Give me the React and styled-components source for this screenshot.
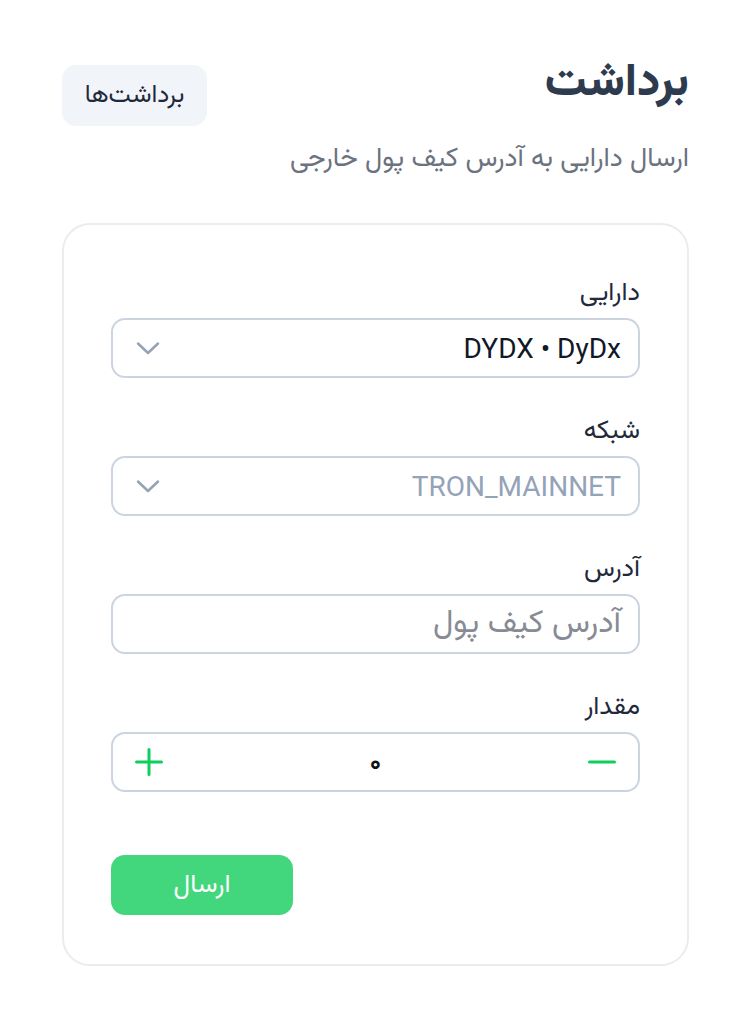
import React, { useState } from 'react';
import styled, { createGlobalStyle } from 'styled-components';

const GlobalStyle = createGlobalStyle`
  * { box-sizing: border-box; }
  body {
    margin: 0;
    background: #ffffff;
    font-family: Vazirmatn, "Noto Sans Arabic", "DejaVu Sans", Roboto, sans-serif;
  }
`;

const Page = styled.div`
  direction: rtl;
  width: 751px;
  padding: 58px 62px 40px;
`;

const Header = styled.div`
  display: flex;
  justify-content: space-between;
  align-items: flex-start;
`;

const TitleBlock = styled.div`
  display: flex;
  flex-direction: column;
  gap: 30px;
`;

const Title = styled.h1`
  margin: 0;
  font-size: 46px;
  font-weight: 800;
  color: #2e3a4e;
  line-height: 52px;
`;

const Subtitle = styled.p`
  margin: 0;
  font-size: 27px;
  color: #6b7280;
  line-height: 40px;
`;

const HistoryButton = styled.button`
  margin-top: 7px;
  width: 145px;
  height: 61px;
  border: none;
  border-radius: 14px;
  background: #f1f5f9;
  color: #1e293b;
  font-family: inherit;
  font-size: 25px;
  cursor: pointer;
`;

const Card = styled.div`
  margin-top: 43px;
  border: 2px solid #ececec;
  border-radius: 28px;
  padding: 51px 47px 49px;
  display: flex;
  flex-direction: column;
`;

const Field = styled.div`
  display: flex;
  flex-direction: column;
  gap: 6px;
  margin-bottom: 36px;
`;

const Label = styled.label`
  font-size: 26px;
  line-height: 36px;
  color: #1e293b;
`;

const Box = styled.div`
  height: 60px;
  border: 2px solid #cbd5e1;
  border-radius: 14px;
  display: flex;
  align-items: center;
  justify-content: space-between;
  padding: 0 17px 0 22px;
`;

const Value = styled.span`
  direction: ltr;
  font-family: Roboto, "DejaVu Sans", sans-serif;
  font-size: 28px;
  color: ${(p) => (p.$muted ? '#94a3b8' : '#111827')};
`;

const Placeholder = styled.span`
  font-size: 32px;
  line-height: 40px;
  color: #878c94;
`;

const Stepper = styled(Box)`
  display: grid;
  grid-template-columns: 1fr auto 1fr;
  padding: 0 22px;
`;

const Amount = styled.span`
  font-size: 27px;
  font-weight: 600;
  color: #111111;
  padding-top: 4px;
`;

const IconBtn = styled.span`
  display: flex;
  align-items: center;
  justify-self: ${(p) => (p.$end ? 'end' : 'start')};
  cursor: pointer;
`;

const Actions = styled.div`
  margin-top: 27px;
  display: flex;
  justify-content: flex-end;
`;

const SubmitButton = styled.button`
  width: 182px;
  height: 60px;
  border: none;
  border-radius: 14px;
  background: #42d77d;
  color: #ffffff;
  font-family: inherit;
  font-size: 26px;
  font-weight: 400;
  cursor: pointer;
`;

const Chevron = () => (
  <svg width="26" height="26" viewBox="0 0 26 26" fill="none" stroke="#94a3b8" strokeWidth="2.5" strokeLinecap="round" strokeLinejoin="round">
    <path d="M3 8.5l10 9.5 10-9.5" />
  </svg>
);

const Plus = () => (
  <svg width="28" height="28" viewBox="0 0 28 28" fill="none" stroke="#0fcf5c" strokeWidth="3" strokeLinecap="round">
    <path d="M14 1.5v25M1.5 14h25" />
  </svg>
);

const Minus = () => (
  <svg width="28" height="28" viewBox="0 0 28 28" fill="none" stroke="#0fcf5c" strokeWidth="3" strokeLinecap="round">
    <path d="M1.5 14h25" />
  </svg>
);

const toPersian = (n) => String(n).replace(/\d/g, (d) => '۰۱۲۳۴۵۶۷۸۹'[d]);

export default function App() {
  const [amount, setAmount] = useState(0);

  return (
    <Page>
      <GlobalStyle />
      <Header>
        <TitleBlock>
          <Title>برداشت</Title>
          <Subtitle>ارسال دارایی به آدرس کیف پول خارجی</Subtitle>
        </TitleBlock>
        <HistoryButton>برداشت‌ها</HistoryButton>
      </Header>

      <Card>
        <Field>
          <Label>دارایی</Label>
          <Box>
            <Value>DYDX • DyDx</Value>
            <Chevron />
          </Box>
        </Field>

        <Field>
          <Label>شبکه</Label>
          <Box>
            <Value $muted>TRON_MAINNET</Value>
            <Chevron />
          </Box>
        </Field>

        <Field>
          <Label>آدرس</Label>
          <Box>
            <Placeholder>آدرس کیف پول</Placeholder>
          </Box>
        </Field>

        <Field>
          <Label>مقدار</Label>
          <Stepper>
            <IconBtn onClick={() => setAmount(Math.max(0, amount - 1))}><Minus /></IconBtn>
            <Amount>{toPersian(amount)}</Amount>
            <IconBtn $end onClick={() => setAmount(amount + 1)}><Plus /></IconBtn>
          </Stepper>
        </Field>

        <Actions>
          <SubmitButton>ارسال</SubmitButton>
        </Actions>
      </Card>
    </Page>
  );
}
